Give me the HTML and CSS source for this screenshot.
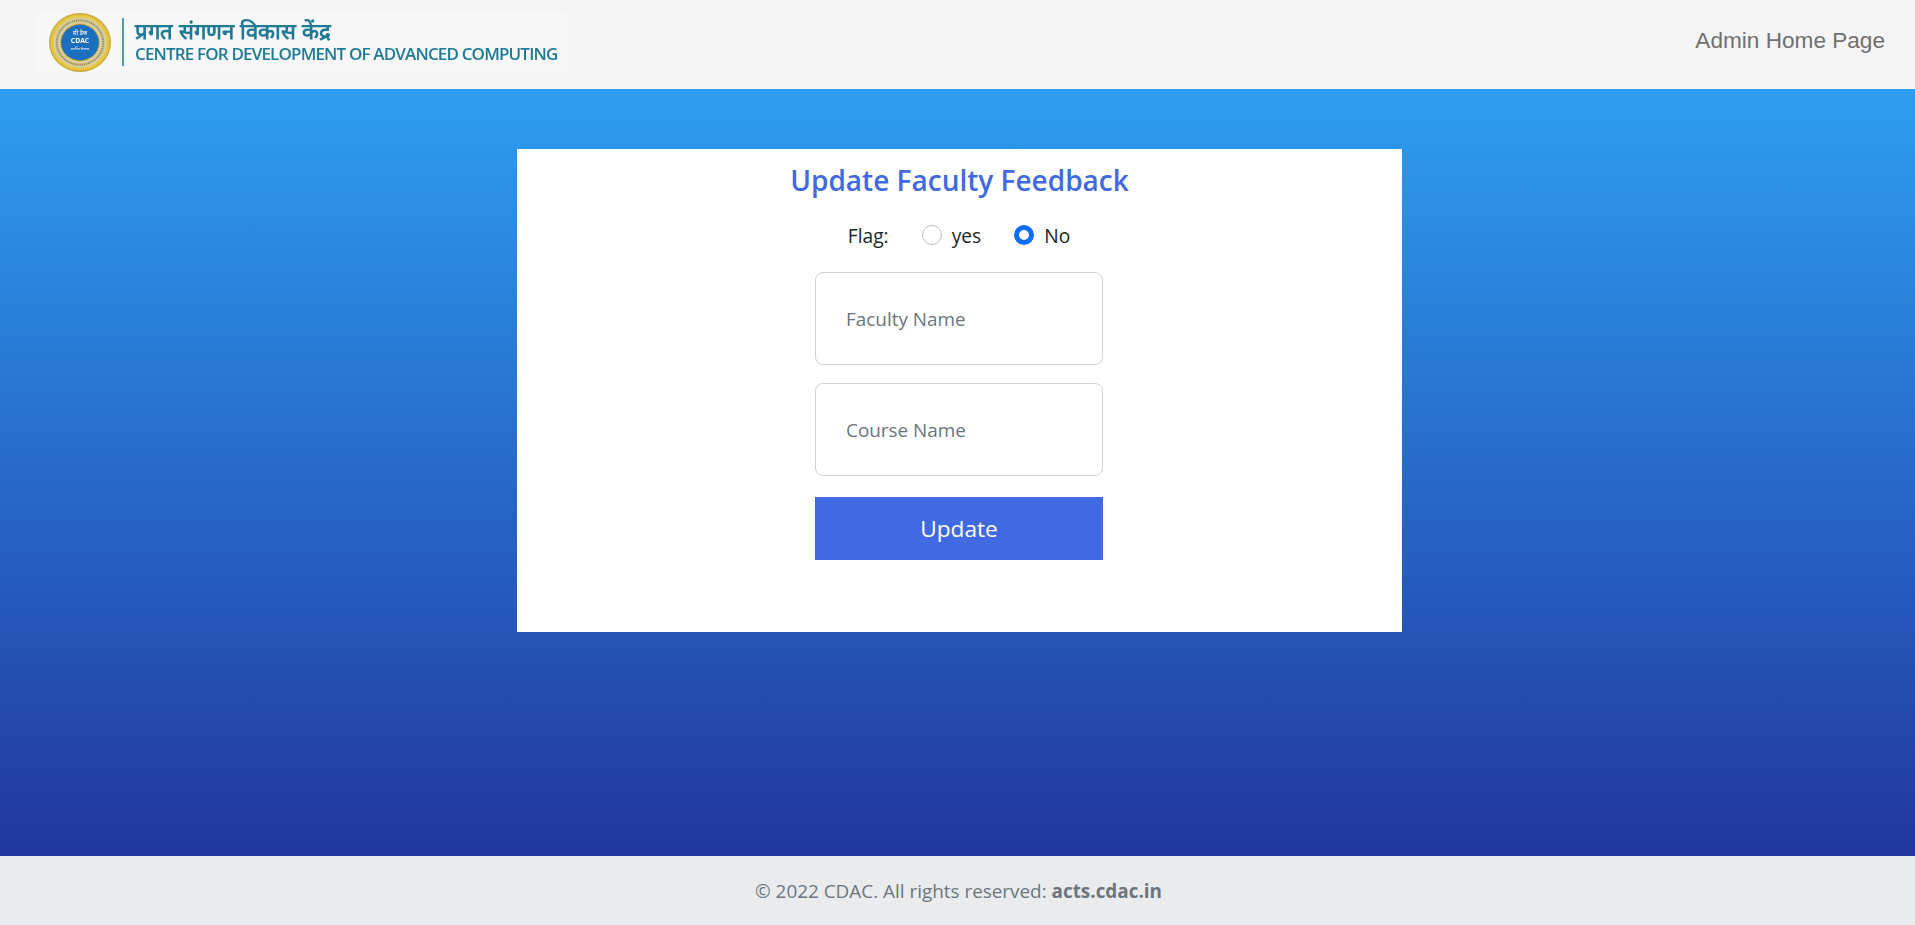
FILE: index.html
```html
<!DOCTYPE html>
<html lang="en">
<head>
    <meta charset="UTF-8" />
    <meta name="viewport" content="width=device-width, initial-scale=1.0" />
    <title>Update Faculty Feedback</title>
    <link rel="stylesheet" href="styles.css">
</head>
<body>
    <header class="topbar">
        <div class="logo">
            <svg class="seal" viewBox="0 0 64 64" width="62" height="59" preserveAspectRatio="none">
                <circle cx="32" cy="32" r="32" fill="#c9a93c" />
                <circle cx="32" cy="32" r="30.5" fill="#e8c53f" />
                <circle cx="32" cy="32" r="27.5" fill="#d8cd9c" />
                <circle cx="32" cy="32" r="24" fill="none" stroke="#6f6a45" stroke-width="2" stroke-dasharray="1.2 0.8" opacity="0.7" />
                <circle cx="32" cy="32" r="20.5" fill="#d9b338" />
                <circle cx="32" cy="32" r="19.5" fill="#1c6fbf" />
                <text x="32" y="24" class="seal-hi">सी डैक</text>
                <text x="32" y="33" class="seal-en">CDAC</text>
                <text x="32" y="40" class="seal-sm">समर्पित विकास</text>
            </svg>
            <span class="logo-rule"></span>
            <div class="logo-text">
                <div class="logo-hi">प्रगत संगणन विकास केंद्र</div>
                <div class="logo-en">CENTRE FOR DEVELOPMENT OF ADVANCED COMPUTING</div>
            </div>
        </div>
        <a class="home-link" href="#">Admin Home Page</a>
    </header>

    <main class="content">
        <div class="card">
            <h1>Update Faculty Feedback</h1>
            <form class="feedback-form">
                <div class="flag-row">
                    <span class="flag-label">Flag:</span>
                    <label class="radio"><input type="radio" name="flag" value="yes" /> yes</label>
                    <label class="radio"><input type="radio" name="flag" value="no" checked /> No</label>
                </div>
                <input class="field" type="text" placeholder="Faculty Name" />
                <input class="field" type="text" placeholder="Course Name" />
                <button type="submit">Update</button>
            </form>
        </div>
    </main>

    <footer class="footer">
        <p>© 2022 CDAC. All rights reserved: <b>acts.cdac.in</b></p>
    </footer>
</body>
</html>
```

FILE: styles.css
```css
* {
    margin: 0;
    padding: 0;
    box-sizing: border-box;
    font-family: "Open Sans", "Noto Sans", sans-serif;
}

body {
    display: flex;
    flex-direction: column;
    min-height: 100vh;
    color: #212529;
}

.topbar {
    height: 89px;
    flex-shrink: 0;
    background-color: #f5f5f5;
    display: flex;
    justify-content: space-between;
    align-items: flex-start;
    padding-left: 38px;
    padding-right: 30px;
}

.logo {
    margin-top: 12px;
    width: 529px;
    height: 60px;
    background-color: #f7f7f7;
    display: flex;
    align-items: center;
    padding-left: 11px;
}

.seal {
    flex-shrink: 0;
    filter: blur(0.5px);
}

.seal text {
    text-anchor: middle;
    fill: #fff;
}

.seal-hi {
    font-size: 6px;
}

.seal-en {
    font-size: 7px;
    font-weight: 700;
}

.seal-sm {
    font-size: 3.5px;
}

.logo-rule {
    width: 2px;
    height: 48px;
    background-color: #4f9cb2;
    margin-left: 11px;
    margin-right: 11px;
}

.logo-text {
    color: #1f7a96;
    filter: blur(0.4px);
    white-space: nowrap;
    margin-bottom: 2px;
}

.logo-hi {
    padding-top: 1px;
    font-family: "Liberation Sans", sans-serif;
    font-size: 22px;
    font-weight: 700;
    line-height: 25px;
}

.logo-en {
    font-size: 17px;
    font-weight: 600;
    line-height: 20px;
    letter-spacing: -0.84px;
}

.home-link {
    margin-top: 27px;
    font-family: "Liberation Sans", Arial, sans-serif;
    font-size: 22.6px;
    line-height: 28px;
    color: #6f6f6f;
    text-decoration: none;
}

.content {
    flex: 1;
    padding-top: 60px;
    background: linear-gradient(#2d9ef1, #21369f);
}

.card {
    width: 885px;
    height: 483px;
    margin-left: 517px;
    background-color: #fff;
    text-align: center;
}

h1 {
    padding-top: 10px;
    font-size: 28px;
    line-height: 42px;
    font-weight: 600;
    color: #4169e1;
}

.feedback-form {
    width: 288px;
    margin-left: 298px;
    display: flex;
    flex-direction: column;
    align-items: center;
}

.flag-row {
    margin-top: 19px;
    height: 30px;
    display: flex;
    align-items: center;
    gap: 33px;
    font-size: 19.2px;
    white-space: nowrap;
}

.radio {
    display: flex;
    align-items: center;
    gap: 10px;
}

.radio input {
    appearance: none;
    width: 20px;
    height: 20px;
    border-radius: 50%;
    border: 1px solid #bfbfbf;
    background-color: #fff;
}

.radio input:checked {
    border: 5px solid #0d6efd;
}

.field {
    width: 288px;
    height: 93px;
    margin-top: 18px;
    padding: 0 30px;
    border: 1px solid #ced4da;
    border-radius: 8px;
    background-color: #fff;
    font-size: 18.9px;
}

.flag-row + .field {
    margin-top: 22px;
}

.field::placeholder {
    color: #6c757d;
    opacity: 1;
}

button {
    width: 288px;
    height: 63px;
    margin-top: 21px;
    border: none;
    background-color: #4169e1;
    color: #fff;
    font-size: 22.7px;
    cursor: pointer;
}

.footer {
    height: 69px;
    flex-shrink: 0;
    padding-left: 2px;
    background-color: #e9ebed;
    color: #6c757d;
    font-size: 18.9px;
    display: flex;
    justify-content: center;
    align-items: center;
}
```
